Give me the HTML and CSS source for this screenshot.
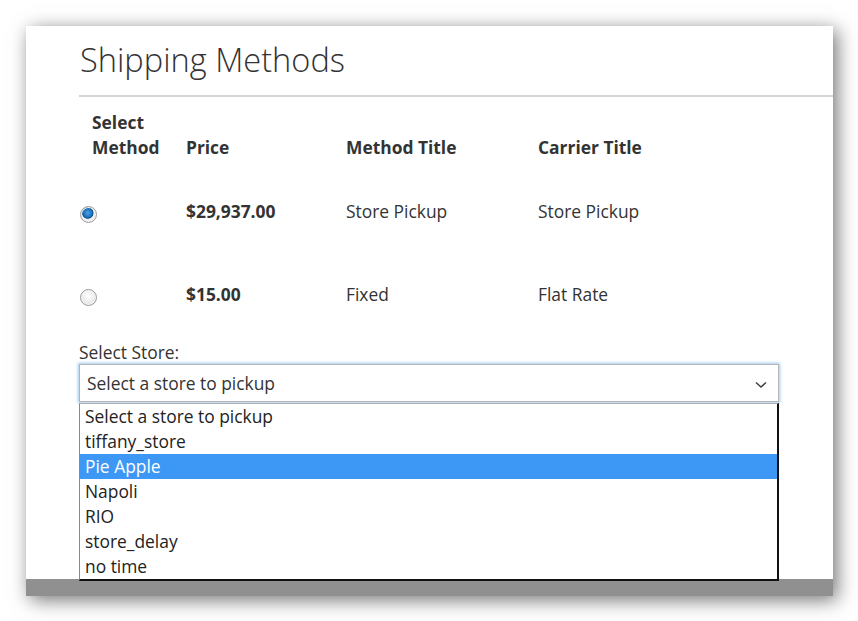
FILE: index.html
```html
<!DOCTYPE html>
<html>
<head>
<meta charset="utf-8">
<link rel="stylesheet" href="styles.css">
</head>
<body>
<div class="panel">
  <div class="content">
    <h1 class="title">Shipping Methods</h1>
    <div class="rule"></div>
    <div class="grid head">
      <div class="c1 th">Select<br>Method</div>
      <div class="th">Price</div>
      <div class="th">Method Title</div>
      <div class="th">Carrier Title</div>
    </div>
    <div class="grid row first">
      <div class="c1"><span class="radio checked"></span></div>
      <div class="price">$29,937.00</div>
      <div>Store Pickup</div>
      <div>Store Pickup</div>
    </div>
    <div class="grid row">
      <div class="c1"><span class="radio"></span></div>
      <div class="price">$15.00</div>
      <div>Fixed</div>
      <div>Flat Rate</div>
    </div>
    <div class="label">Select Store:</div>
    <div class="select">
      <span>Select a store to pickup</span>
      <svg class="chev" width="12" height="8" viewBox="0 0 12 8"><path d="M1 1.5 L6 6 L11 1.5" fill="none" stroke="#444" stroke-width="1.6"/></svg>
    </div>
  </div>
  <div class="bar"></div>
  <ul class="list">
    <li>Select a store to pickup</li>
    <li>tiffany_store</li>
    <li class="sel">Pie Apple</li>
    <li>Napoli</li>
    <li>RIO</li>
    <li>store_delay</li>
    <li>no time</li>
  </ul>
</div>
</body>
</html>
```
FILE: styles.css
```css
html, body {
  margin: 0;
  padding: 0;
  background: #fff;
}
body {
  width: 858px;
  height: 621px;
  overflow: hidden;
  font-family: "Open Sans", "DejaVu Sans", sans-serif;
  color: #333;
  font-size: 17.4px;
}
.panel {
  position: relative;
  margin: 26px 0 0 26px;
  width: 807px;
  height: 570px;
  background: #fff;
  display: flex;
  flex-direction: column;
  box-shadow: 4px 4px 18px rgba(0, 0, 0, 0.55);
}
.content {
  flex: 1;
  padding: 13px 0 0 53px;
}
.title {
  margin: 0;
  font-size: 32.6px;
  line-height: 41px;
  font-weight: 300;
  color: #333;
  padding-left: 1px;
}
.rule {
  margin-top: 15px;
  height: 2px;
  background: #d4d4d4;
}
.grid {
  display: grid;
  grid-template-columns: 107px 160px 192px 1fr;
}
.head {
  padding-top: 13px;
  align-items: end;
  line-height: 25px;
}
.th {
  font-weight: 700;
}
.head .c1 {
  padding-left: 13px;
}
.row {
  height: 83px;
  align-items: center;
  line-height: 22px;
}
.row.first {
  margin-top: 9px;
}
.price {
  font-weight: 700;
}
.radio {
  display: block;
  width: 17px;
  height: 17px;
  box-sizing: border-box;
  margin: 8px 0 0 1px;
  border-radius: 50%;
  border: 1px solid #9a9a9a;
  background: radial-gradient(circle at 50% 40%, #ffffff 0%, #e6e6e6 70%, #d0d0d0 100%);
  box-shadow: inset 0 0 0 1px #f4f4f4;
}
.radio.checked {
  background: radial-gradient(circle at 45% 40%, #4aa3e8 0%, #1a6fb8 36%, #0e4f8a 44%, #f2f2f2 50%, #e4e4e4 76%, #c4c4c4 100%);
}
.label {
  margin-top: 6px;
  line-height: 22px;
}
.select {
  margin-top: 1px;
  width: 700px;
  height: 38px;
  box-sizing: border-box;
  border: 1px solid #b5b5b5;
  box-shadow: 0 0 3px 1px #9ec8ee;
  display: flex;
  align-items: center;
  justify-content: space-between;
  padding: 0 11px 1px 7px;
  line-height: 22px;
}
.chev {
  margin-top: 4px;
}
.bar {
  height: 17px;
  background: #909090;
}
.list {
  position: absolute;
  left: 53px;
  top: 377px;
  width: 700px;
  box-sizing: border-box;
  margin: 0;
  padding: 0;
  list-style: none;
  background: #fff;
  border-left: 1px solid #8a8a8a;
  border-top: 1px solid #b0b0b0;
  border-right: 2px solid #111;
  border-bottom: 2px solid #111;
}
.list li {
  height: 25px;
  line-height: 25px;
  padding-left: 5px;
  color: #222;
}
.list li.sel {
  background: #3d98f5;
  color: #fff;
}
```
